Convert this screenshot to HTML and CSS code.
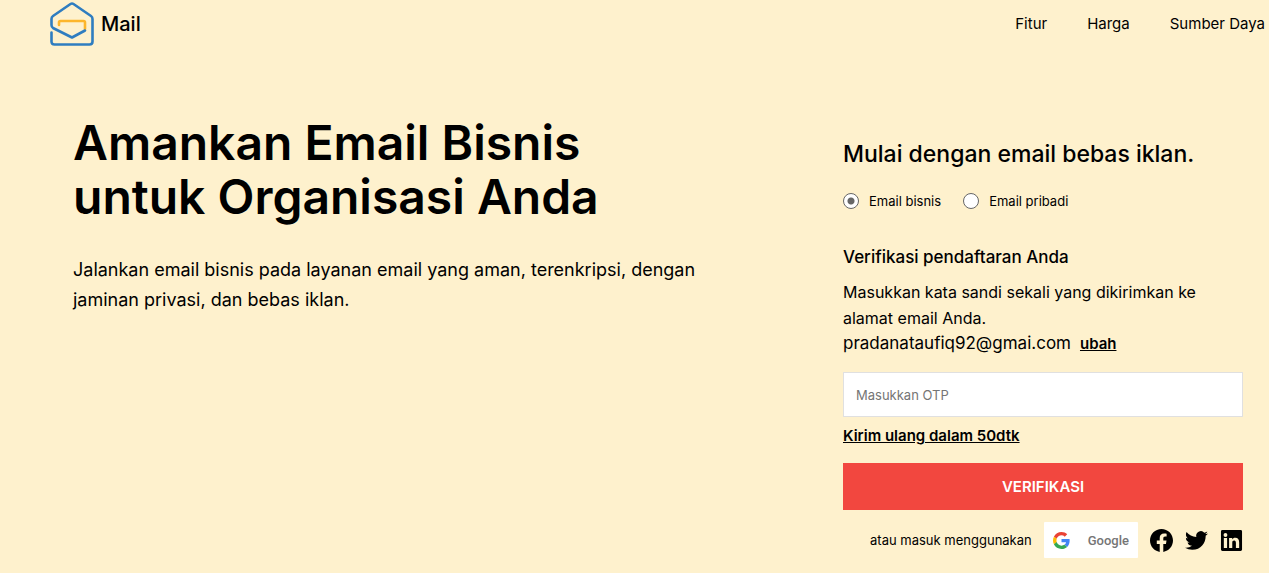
FILE: index.html
```html
<!DOCTYPE html>
<html lang="id">
<head>
<meta charset="utf-8">
<meta name="viewport" content="width=device-width, initial-scale=1">
<title>Mail</title>
<link rel="stylesheet" href="styles.css">
</head>
<body>
<header class="header">
  <a class="brand" href="#">
    <svg class="brand-logo" viewBox="0 0 44 44" fill="none" stroke-width="2.6" stroke-linecap="round" stroke-linejoin="round" aria-hidden="true">
      <path stroke="#fdb62b" d="M9 23V20.500Q9 19 10.500 19H33.500Q35 19 35 20.500V27"/>
      <path stroke="#2f7dc0" d="M35 28.500L22 35.500L3 26Q1.500 25 1.500 23V17Q1.500 15 3 14L20.500 2Q22 1 23.500 2L41 14Q42.500 15 42.500 17V39.500Q42.500 42.500 39.500 42.500H4.500Q1.500 42.500 1.500 39.500V30.500"/>
    </svg>
    <span>Mail</span>
  </a>
  <nav class="nav">
    <a href="#">Fitur</a>
    <a href="#">Harga</a>
    <a href="#">Sumber Daya</a>
  </nav>
</header>
<main class="main">
  <section class="hero">
    <h1 class="hero-title">Amankan Email Bisnis<br>untuk Organisasi Anda</h1>
    <p class="hero-text">Jalankan email bisnis pada layanan email yang aman, terenkripsi, dengan jaminan privasi, dan bebas iklan.</p>
  </section>
  <form class="signup">
    <h2 class="signup-title">Mulai dengan email bebas iklan.</h2>
    <div class="account-types">
      <label class="account-type"><input class="radio" type="radio" name="account" checked>Email bisnis</label>
      <label class="account-type"><input class="radio" type="radio" name="account">Email pribadi</label>
    </div>
    <h3 class="verify-title">Verifikasi pendaftaran Anda</h3>
    <p class="verify-text">Masukkan kata sandi sekali yang dikirimkan ke alamat email Anda.</p>
    <p class="verify-email"><span>pradanataufiq92@gmai.com</span><a class="strong-link" href="#">ubah</a></p>
    <input class="otp" type="text" placeholder="Masukkan OTP" aria-label="Masukkan OTP">
    <a class="strong-link resend" href="#">Kirim ulang dalam 50dtk</a>
    <button class="submit" type="submit">VERIFIKASI</button>
    <div class="social">
      <span class="social-label">atau masuk menggunakan</span>
      <button class="google" type="button">
        <svg class="google-logo" viewBox="0 0 48 48" aria-hidden="true">
          <path fill="#ea4335" d="M24 9.500c3.540 0 6.710 1.220 9.210 3.600l6.850-6.850C35.900 2.380 30.470 0 24 0 14.620 0 6.510 5.380 2.560 13.220l7.980 6.190C12.430 13.720 17.740 9.500 24 9.500z"/>
          <path fill="#4285f4" d="M46.980 24.550c0-1.570-.15-3.090-.38-4.550H24v9.020h12.940c-.58 2.960-2.260 5.480-4.780 7.180l7.730 6c4.510-4.180 7.090-10.360 7.090-17.650z"/>
          <path fill="#fbbc05" d="M10.530 28.590c-.48-1.450-.76-2.990-.76-4.590s.27-3.140.76-4.590l-7.980-6.190C.92 16.460 0 20.120 0 24c0 3.880.92 7.540 2.560 10.780l7.970-6.190z"/>
          <path fill="#34a853" d="M24 48c6.480 0 11.930-2.130 15.890-5.810l-7.730-6c-2.150 1.450-4.920 2.300-8.160 2.300-6.260 0-11.570-4.220-13.470-9.910l-7.980 6.190C6.510 42.620 14.620 48 24 48z"/>
        </svg>
        <span>Google</span>
      </button>
      <a class="social-link" href="#" aria-label="Facebook">
        <svg viewBox="0 0 24 24" aria-hidden="true"><path d="M24 12.073C24 5.446 18.627.073 12 .073S0 5.446 0 12.073c0 5.990 4.388 10.954 10.125 11.854v-8.385H7.078v-3.470h3.047V9.430c0-3.007 1.792-4.669 4.533-4.669 1.312 0 2.686.235 2.686.235v2.953H15.830c-1.491 0-1.956.925-1.956 1.874v2.250h3.328l-.532 3.470h-2.796v8.385C19.612 23.027 24 18.062 24 12.073z"/></svg>
      </a>
      <a class="social-link" href="#" aria-label="Twitter">
        <svg viewBox="0 0 24 24" aria-hidden="true"><path d="M23.953 4.570a10 10 0 01-2.825.775 4.958 4.958 0 002.163-2.723c-.951.555-2.005.959-3.127 1.184a4.920 4.920 0 00-8.384 4.482C7.690 8.095 4.067 6.130 1.640 3.162a4.822 4.822 0 00-.666 2.475c0 1.710.870 3.213 2.188 4.096a4.904 4.904 0 01-2.228-.616v.060a4.923 4.923 0 003.946 4.827 4.996 4.996 0 01-2.212.085 4.936 4.936 0 004.604 3.417 9.867 9.867 0 01-6.102 2.105c-.390 0-.779-.023-1.170-.067a13.995 13.995 0 007.557 2.209c9.053 0 13.998-7.496 13.998-13.985 0-.210 0-.420-.015-.630A9.935 9.935 0 0024 4.590z"/></svg>
      </a>
      <a class="social-link" href="#" aria-label="LinkedIn">
        <svg viewBox="0 0 24 24" aria-hidden="true"><path fill-rule="evenodd" d="M2.500 1H21.500A1.500 1.500 0 0123 2.500V21.500A1.500 1.500 0 0121.500 23H2.500A1.500 1.500 0 011 21.500V2.500A1.500 1.500 0 012.500 1zM4 9.500V19.700H7.400V9.500zM5.700 4.300A2 2 0 105.700 8.300 2 2 0 105.700 4.300zM9.500 9.500V19.700H12.800V14.600C12.800 13 13.400 12.100 14.800 12.100S16.600 13.200 16.600 14.700V19.700H20V14C20 11 18.700 9.200 16 9.200 14.500 9.200 13.300 9.900 12.700 11V9.500z"/></svg>
      </a>
    </div>
  </form>
</main>
</body>
</html>
```
FILE: styles.css
```css
* { box-sizing: border-box; }

body {
  margin: 0;
  background: #fef1cd;
  color: #000;
  font-family: Inter, "Liberation Sans", sans-serif;
}

h1, h2, h3, p { margin: 0; }

a { color: inherit; text-decoration: none; }

.header {
  display: flex;
  align-items: center;
  justify-content: space-between;
  height: 48px;
  padding: 0 4px 0 50px;
}

.brand {
  display: flex;
  align-items: center;
  gap: 7px;
  font-size: 20px;
  font-weight: 500;
}

.brand-logo { width: 44px; height: 44px; }

.nav {
  display: flex;
  gap: 40px;
  font-size: 15px;
  line-height: 20px;
}

.main {
  display: flex;
  justify-content: space-between;
  padding: 68px 26px 0 73px;
}

.hero { max-width: 650px; }

.hero-title {
  font-size: 48px;
  font-weight: 600;
  line-height: 54px;
}

.hero-text {
  margin-top: 31px;
  font-size: 18px;
  line-height: 30px;
}

.signup {
  display: flex;
  flex-direction: column;
  width: 400px;
  padding-top: 22px;
}

.signup-title {
  font-size: 23px;
  font-weight: 500;
  line-height: 32px;
}

.account-types {
  display: flex;
  gap: 22px;
  margin-top: 22px;
}

.account-type {
  display: flex;
  align-items: center;
  gap: 10px;
  font-size: 13px;
  line-height: 18px;
}

.radio {
  appearance: none;
  width: 16px;
  height: 16px;
  margin: 0;
  border: 1px solid #666;
  border-radius: 50%;
  background: #fff;
}

.radio:checked { background: radial-gradient(circle, #666 3px, #fff 4px); }

.verify-title {
  margin-top: 34px;
  font-size: 17px;
  font-weight: 500;
  line-height: 26px;
}

.verify-text,
.verify-email {
  font-size: 16px;
  line-height: 26px;
}

.verify-text { margin-top: 9px; }

.verify-email {
  display: flex;
  gap: 9px;
  font-size: 17px;
  line-height: 25px;
}

.strong-link {
  font-size: 15px;
  font-weight: 600;
  text-decoration: underline;
}

.otp {
  height: 45px;
  margin-top: 16px;
  padding: 0 12px;
  border: 1px solid #e0e0e0;
  font-family: inherit;
  font-size: 13px;
}

.otp::placeholder { color: #757575; }

.resend {
  align-self: flex-start;
  margin-top: 8px;
  line-height: 22px;
}

.submit {
  height: 47px;
  margin-top: 16px;
  border: 0;
  background: #f2473f;
  color: #fff;
  font-family: inherit;
  font-size: 15px;
  font-weight: 600;
}

.social {
  display: flex;
  align-items: center;
  justify-content: flex-end;
  gap: 12px;
  margin-top: 12px;
}

.social-label { font-size: 13px; }

.google {
  display: flex;
  align-items: center;
  gap: 18px;
  height: 36px;
  padding: 0 9px;
  border: 0;
  border-radius: 1px;
  background: #fff;
  color: #757575;
  font-family: Roboto, sans-serif;
  font-size: 13px;
  font-weight: 500;
}

.google-logo { width: 17px; height: 17px; }

.social-link { display: flex; }

.social-link svg {
  width: 23px;
  height: 23px;
}
```
